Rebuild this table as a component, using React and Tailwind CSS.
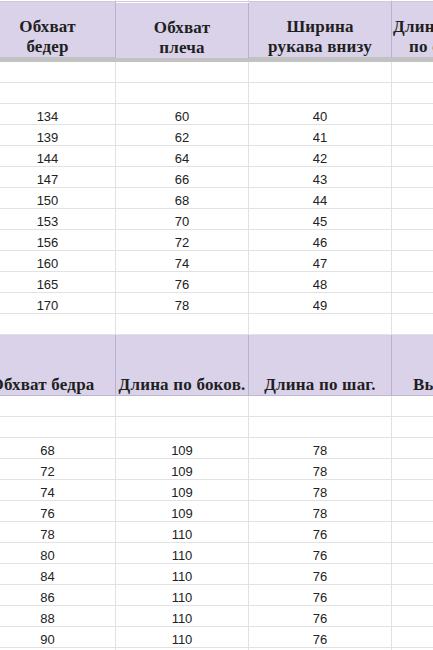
import React from "react";

const W = ["w-[136px]", "w-[133px]", "w-[143px]", "w-[110px]"];

const serif = { fontFamily: '"Liberation Serif", "DejaVu Serif", serif' };
const sans = { fontFamily: '"Liberation Sans", Arial, sans-serif' };

function HeaderCell({ w, children, extra = "" }) {
  return (
    <div
      className={`${w} shrink-0 h-full flex items-end justify-center text-center bg-[#d9d2e9] border-r border-[#bab1cf] text-[17px] leading-[20px] tracking-[0.2px] font-bold text-[#1f1f1f] whitespace-nowrap ${extra}`}
      style={serif}
    >
      {children}
    </div>
  );
}

function DataRow({ values = ["", "", "", ""] }) {
  return (
    <div className="flex h-[21px]">
      {values.map((v, i) => (
        <div
          key={i}
          className={`${W[i]} shrink-0 h-full flex items-end justify-center border-r border-b border-[#e2e2e2] text-[13px] leading-[15px] text-[#222222]`}
          style={sans}
        >
          {v}
        </div>
      ))}
    </div>
  );
}

const top = [
  ["134", "60", "40"],
  ["139", "62", "41"],
  ["144", "64", "42"],
  ["147", "66", "43"],
  ["150", "68", "44"],
  ["153", "70", "45"],
  ["156", "72", "46"],
  ["160", "74", "47"],
  ["165", "76", "48"],
  ["170", "78", "49"],
];

const bottom = [
  ["68", "109", "78"],
  ["72", "109", "78"],
  ["74", "109", "78"],
  ["76", "109", "78"],
  ["78", "110", "76"],
  ["80", "110", "76"],
  ["84", "110", "76"],
  ["86", "110", "76"],
  ["88", "110", "76"],
  ["90", "110", "76"],
];

export default function App() {
  return (
    <div className="w-[433px] h-[650px] overflow-hidden bg-white">
      <div className="ml-[-20px] w-[522px]">
        {/* top strip */}
        <div className="flex h-[1px]">
          {W.map((w, i) => (
            <div key={i} className={`${w} shrink-0 h-full border-r border-[#e2e2e2]`} />
          ))}
        </div>
        {/* header 1 */}
        <div className="flex h-[56px] border-t border-[#cfc9da]">
          <HeaderCell w={W[0]}>
            Обхват
            <br />
            бедер
          </HeaderCell>
          <HeaderCell w={W[1]} extra="translate-y-[1px]">
            Обхват
            <br />
            плеча
          </HeaderCell>
          <HeaderCell w={W[2]}>
            Ширина
            <br />
            рукава внизу
          </HeaderCell>
          <HeaderCell w={W[3]} extra="justify-start text-left">
            <div className="flex flex-col">
              <span className="pl-[1px]">Длина изделия</span>
              <span className="pl-[17px]">по спинке</span>
            </div>
          </HeaderCell>
        </div>
        {/* thick band */}
        <div className="h-[5px] bg-[#c2c2c2]" />
        <DataRow />
        <DataRow />
        {top.map((r, i) => (
          <DataRow key={i} values={[...r, ""]} />
        ))}
        <DataRow />
        {/* header 2 */}
        <div className="flex h-[61px] border-b border-[#bdb6cc]">
          <HeaderCell w={W[0]} extra="pr-[10px]">
            Обхват бедра
          </HeaderCell>
          <HeaderCell w={W[1]}>Длина по боков.</HeaderCell>
          <HeaderCell w={W[2]} extra="pr-0">
            Длина по шаг.
          </HeaderCell>
          <HeaderCell w={W[3]} extra="justify-start pl-[21px]">
            Высота посадки
          </HeaderCell>
        </div>
        <DataRow />
        <DataRow />
        {bottom.map((r, i) => (
          <DataRow key={i} values={[...r, ""]} />
        ))}
        <DataRow />
      </div>
    </div>
  );
}
